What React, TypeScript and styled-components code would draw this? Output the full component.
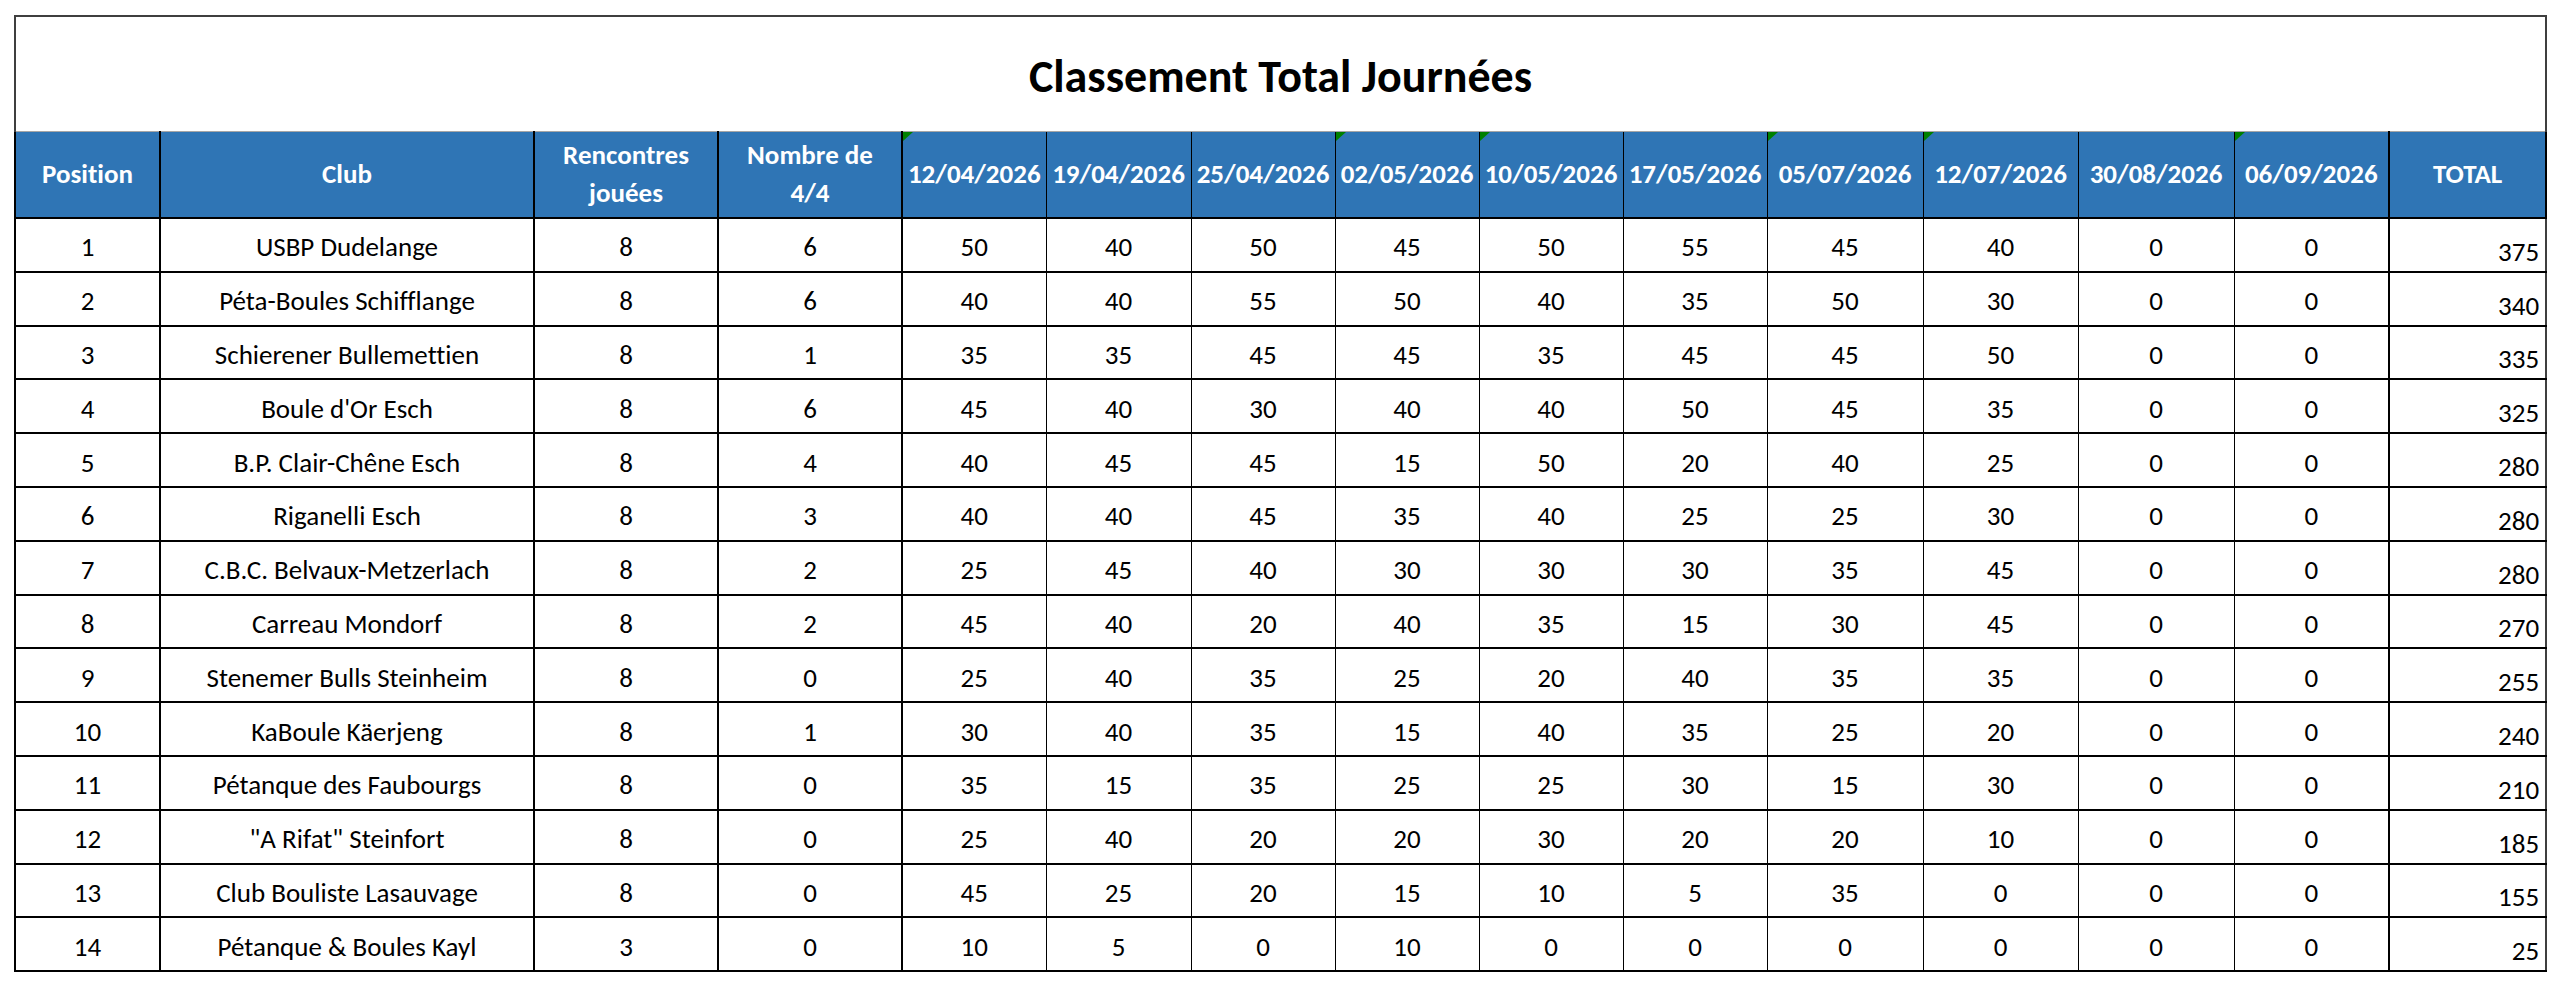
import styled, { createGlobalStyle } from 'styled-components';

const GlobalStyle = createGlobalStyle`
  html, body {
    margin: 0;
    background: #ffffff;
  }
  body {
    font-family: Carlito, Calibri, Lato, "Liberation Sans", sans-serif;
    font-variant-ligatures: none;
    color: #000000;
  }
`;

const Page = styled.div`
  padding: 15px 0 0 14px;
`;

const Sheet = styled.table`
  border-collapse: collapse;
  table-layout: fixed;
  width: 2531px;
`;

const TitleRow = styled.tr`
  height: 115px;
`;

const HeadRow = styled.tr`
  height: 87px;
`;

const BodyRow = styled.tr`
  height: 53.8px;
`;

const TitleCell = styled.th`
  padding: 4px 0 0;
  border-top: 2px solid #3f3f3f;
  border-left: 2px solid #3f3f3f;
  border-right: 2px solid #3f3f3f;
  border-bottom: 1px solid #a6a6a6;
  font-size: 46px;
  font-weight: 700;
  line-height: 1;
  text-align: center;
  vertical-align: middle;
`;

const HeadCell = styled.th<{ $flag?: boolean; $thick?: boolean }>`
  position: relative;
  padding: 0 4px;
  background: #2f75b5;
  color: #ffffff;
  font-size: 27px;
  font-weight: 700;
  line-height: 38px;
  text-align: center;
  vertical-align: middle;
  white-space: nowrap;
  border-left: ${(p) => (p.$thick ? 2 : 1)}px solid #000000;
  border-right: ${(p) => (p.$thick ? 2 : 1)}px solid #000000;
  border-bottom: 2px solid #000000;

  &::before {
    content: '';
    display: ${(p) => (p.$flag ? 'block' : 'none')};
    position: absolute;
    top: 0;
    left: 0;
    border-top: 9px solid #008000;
    border-right: 10px solid transparent;
  }
`;

const Cell = styled.td<{ $thick?: boolean }>`
  padding: 4px 4px 0;
  font-size: 27px;
  line-height: 1;
  text-align: center;
  vertical-align: middle;
  white-space: nowrap;
  border-left: ${(p) => (p.$thick ? 2 : 1)}px solid #000000;
  border-right: ${(p) => (p.$thick ? 2 : 1)}px solid #000000;
  border-bottom: 2px solid #000000;
`;

const TotalCell = styled.td`
  padding: 0 6px 6px 4px;
  font-size: 27px;
  line-height: 1;
  text-align: right;
  vertical-align: bottom;
  border-left: 2px solid #000000;
  border-right: 2px solid #3f3f3f;
  border-bottom: 2px solid #000000;
`;

type Row = [number, string, number, number, number[], number];

const dates: { label: string; flag: boolean; width: number }[] = [
  { label: '12/04/2026', flag: true, width: 144 },
  { label: '19/04/2026', flag: false, width: 145 },
  { label: '25/04/2026', flag: false, width: 144 },
  { label: '02/05/2026', flag: true, width: 144 },
  { label: '10/05/2026', flag: true, width: 144 },
  { label: '17/05/2026', flag: false, width: 144 },
  { label: '05/07/2026', flag: true, width: 156 },
  { label: '12/07/2026', flag: true, width: 155 },
  { label: '30/08/2026', flag: false, width: 156 },
  { label: '06/09/2026', flag: true, width: 155 },
];

const rows: Row[] = [
  [1, 'USBP Dudelange', 8, 6, [50, 40, 50, 45, 50, 55, 45, 40, 0, 0], 375],
  [2, 'Péta-Boules Schifflange', 8, 6, [40, 40, 55, 50, 40, 35, 50, 30, 0, 0], 340],
  [3, 'Schierener Bullemettien', 8, 1, [35, 35, 45, 45, 35, 45, 45, 50, 0, 0], 335],
  [4, "Boule d'Or Esch", 8, 6, [45, 40, 30, 40, 40, 50, 45, 35, 0, 0], 325],
  [5, 'B.P. Clair-Chêne Esch', 8, 4, [40, 45, 45, 15, 50, 20, 40, 25, 0, 0], 280],
  [6, 'Riganelli Esch', 8, 3, [40, 40, 45, 35, 40, 25, 25, 30, 0, 0], 280],
  [7, 'C.B.C. Belvaux-Metzerlach', 8, 2, [25, 45, 40, 30, 30, 30, 35, 45, 0, 0], 280],
  [8, 'Carreau Mondorf', 8, 2, [45, 40, 20, 40, 35, 15, 30, 45, 0, 0], 270],
  [9, 'Stenemer Bulls Steinheim', 8, 0, [25, 40, 35, 25, 20, 40, 35, 35, 0, 0], 255],
  [10, 'KaBoule Käerjeng', 8, 1, [30, 40, 35, 15, 40, 35, 25, 20, 0, 0], 240],
  [11, 'Pétanque des Faubourgs', 8, 0, [35, 15, 35, 25, 25, 30, 15, 30, 0, 0], 210],
  [12, '"A Rifat" Steinfort', 8, 0, [25, 40, 20, 20, 30, 20, 20, 10, 0, 0], 185],
  [13, 'Club Bouliste Lasauvage', 8, 0, [45, 25, 20, 15, 10, 5, 35, 0, 0, 0], 155],
  [14, 'Pétanque & Boules Kayl', 3, 0, [10, 5, 0, 10, 0, 0, 0, 0, 0, 0], 25],
];

export default function App() {
  return (
    <>
      <GlobalStyle />
      <Page>
        <Sheet>
          <colgroup>
            <col style={{ width: 145 }} />
            <col style={{ width: 374 }} />
            <col style={{ width: 184 }} />
            <col style={{ width: 184 }} />
            {dates.map((d) => (
              <col key={d.label} style={{ width: d.width }} />
            ))}
            <col style={{ width: 157 }} />
          </colgroup>
          <thead>
            <TitleRow>
              <TitleCell colSpan={15}>Classement Total Journées</TitleCell>
            </TitleRow>
            <HeadRow>
              <HeadCell $thick>Position</HeadCell>
              <HeadCell $thick>Club</HeadCell>
              <HeadCell $thick>
                Rencontres
                <br />
                jouées
              </HeadCell>
              <HeadCell $thick>
                Nombre de
                <br />
                4/4
              </HeadCell>
              {dates.map((d) => (
                <HeadCell key={d.label} $flag={d.flag}>
                  {d.label}
                </HeadCell>
              ))}
              <HeadCell $thick>TOTAL</HeadCell>
            </HeadRow>
          </thead>
          <tbody>
            {rows.map(([pos, club, played, fours, scores, total]) => (
              <BodyRow key={pos}>
                <Cell $thick>{pos}</Cell>
                <Cell $thick>{club}</Cell>
                <Cell $thick>{played}</Cell>
                <Cell $thick>{fours}</Cell>
                {scores.map((s, i) => (
                  <Cell key={i}>{s}</Cell>
                ))}
                <TotalCell>{total}</TotalCell>
              </BodyRow>
            ))}
          </tbody>
        </Sheet>
      </Page>
    </>
  );
}
